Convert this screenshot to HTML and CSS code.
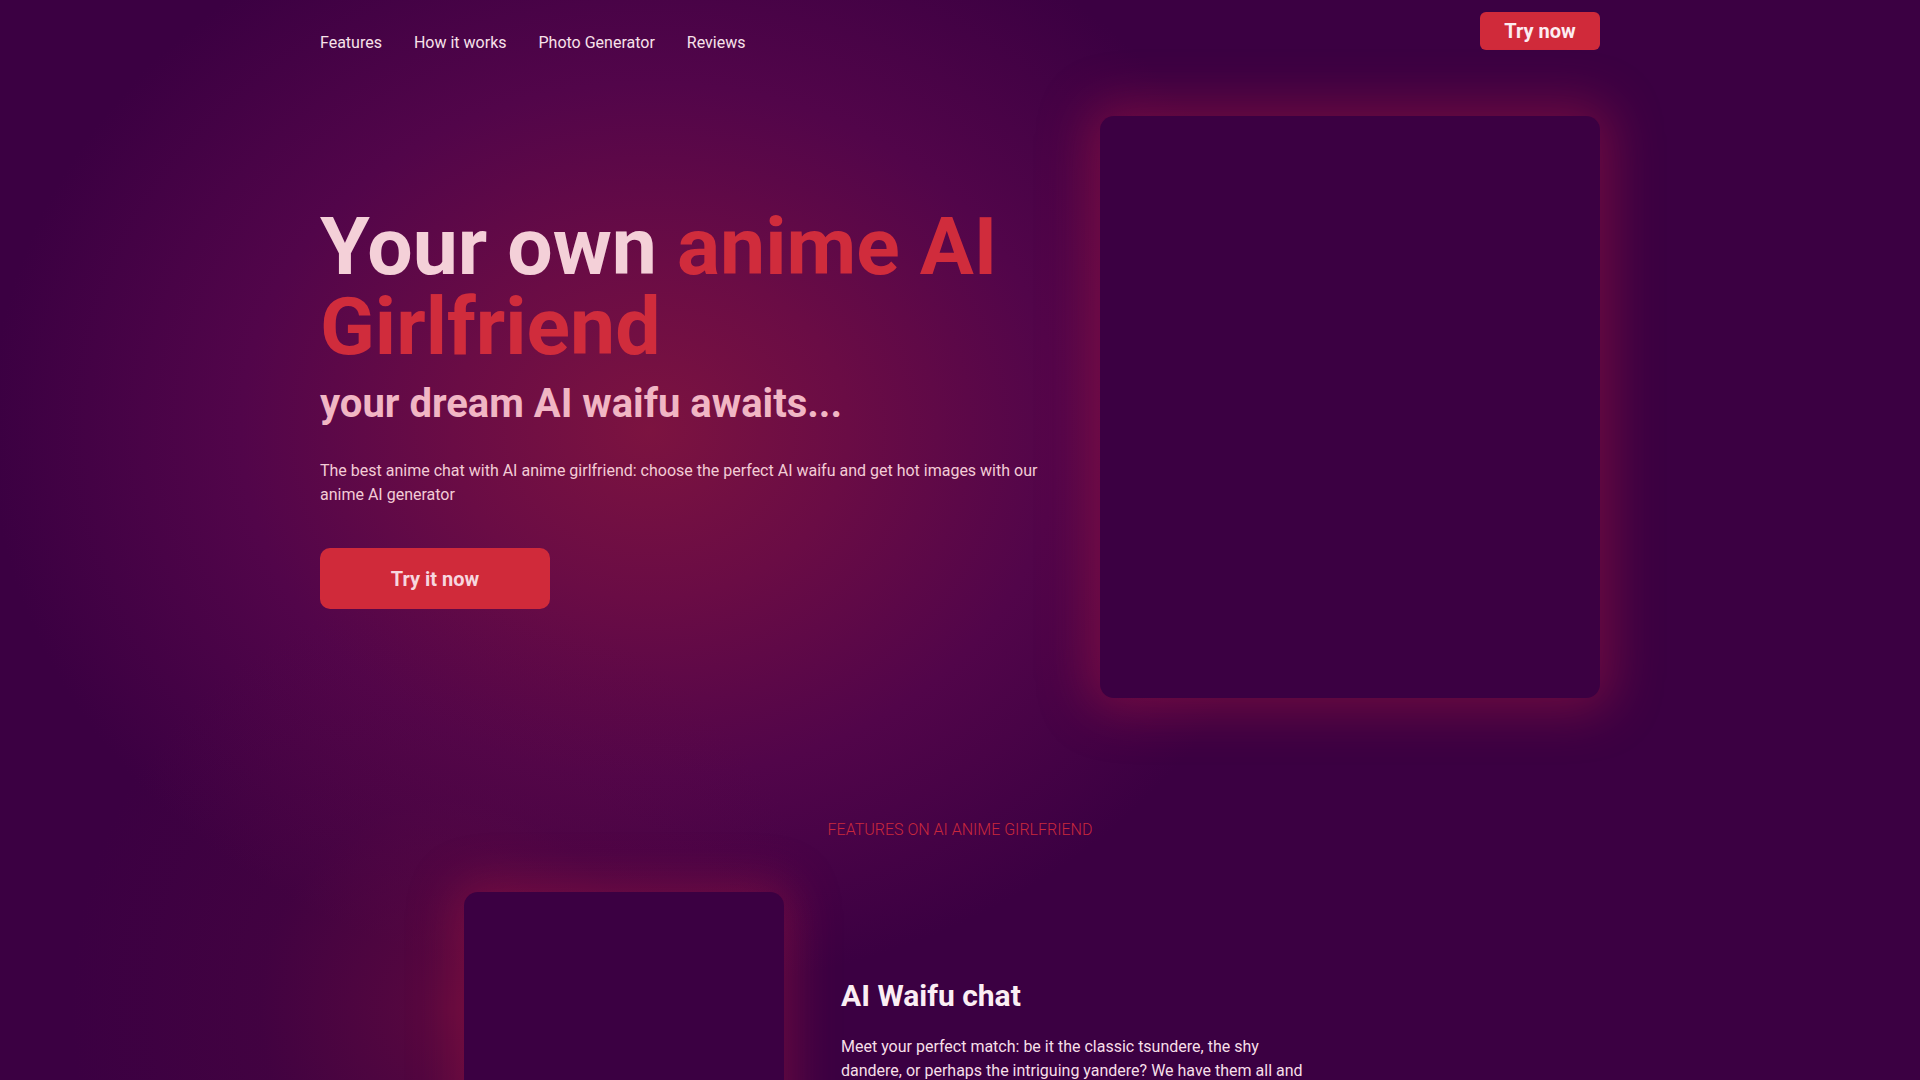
FILE: index.html
```html
<!DOCTYPE html>
<html lang="en">
<head>
<meta charset="utf-8">
<title>AI Anime Girlfriend</title>
<link rel="stylesheet" href="styles.css">
</head>
<body>
<div class="page">
  <header class="header container">
    <nav class="nav-links">
      <a href="#features">Features</a>
      <a href="#how">How it works</a>
      <a href="#generator">Photo Generator</a>
      <a href="#reviews">Reviews</a>
    </nav>
    <a class="btn btn-small" href="#try">Try now</a>
  </header>

  <section class="hero container">
    <div class="hero-text">
      <h1 class="hero-title"><span class="light">Your own</span> <span class="red">anime AI Girlfriend</span></h1>
      <h2 class="hero-sub">your dream AI waifu awaits...</h2>
      <p class="hero-desc">The best anime chat with AI anime girlfriend: choose the perfect AI waifu and get hot images with our anime AI generator</p>
      <a class="btn btn-large" href="#try">Try it now</a>
    </div>
    <div class="hero-image"></div>
  </section>

  <section class="features" id="features">
    <p class="features-label">FEATURES ON AI ANIME GIRLFRIEND</p>
    <div class="feature-row">
      <div class="feature-image"></div>
      <div class="feature-text">
        <h3 class="feature-title">AI Waifu chat</h3>
        <p class="feature-desc">Meet your perfect match: be it the classic tsundere, the shy dandere, or perhaps the intriguing yandere? We have them all and many more, waiting to chat with you any time of the day.</p>
      </div>
    </div>
  </section>
</div>
</body>
</html>
```
FILE: styles.css
```css
* { box-sizing: border-box; }

html, body {
  margin: 0;
  padding: 0;
}

body {
  font-family: Roboto, "Liberation Sans", Arial, sans-serif;
  background-color: #3b0042;
  color: #f6dde6;
  min-height: 100vh;
}

.page {
  background:
    radial-gradient(ellipse 380px 420px at 450px 1010px, rgba(120, 16, 60, 0.5) 0%, rgba(90, 10, 62, 0.22) 50%, rgba(59, 0, 66, 0) 100%),
    radial-gradient(ellipse 660px 560px at 650px 430px, #7c1340 0%, #6a0c45 30%, #52054a 62%, rgba(59, 0, 66, 0) 100%),
    #3b0042;
  min-height: 1300px;
}

.container {
  width: 1280px;
  margin: 0 auto;
}

a { text-decoration: none; }

/* header */
.header {
  display: flex;
  justify-content: space-between;
  align-items: flex-start;
  padding-top: 12px;
}

.nav-links {
  display: flex;
  gap: 32px;
  padding-top: 19px;
  line-height: 24px;
  font-size: 16px;
}

.nav-links a {
  color: #f8e1ea;
}

.btn {
  display: inline-flex;
  align-items: center;
  justify-content: center;
  background: #d02a3a;
  font-weight: 700;
  font-size: 20px;
}

.btn-small {
  width: 120px;
  height: 38px;
  border-radius: 6px;
  color: #fcecf1;
}

.btn-large {
  width: 230px;
  height: 61px;
  border-radius: 10px;
  color: #f7d6df;
}

/* hero */
.hero {
  display: grid;
  grid-template-columns: 720px 500px;
  column-gap: 60px;
  align-items: center;
  padding-top: 61px;
}

.hero-text {
  padding-top: 2px;
}

.hero-title {
  margin: 0;
  font-size: 80.5px;
  line-height: 80px;
  font-weight: 700;
}

.hero-title .light { color: #f4d0d8; }
.hero-title .red { color: #d02c3c; }

.hero-sub {
  margin: 13px 0 0;
  font-size: 40px;
  line-height: 48px;
  font-weight: 700;
  color: #f1b6c4;
}

.hero-desc {
  margin: 31px 0 0;
  font-size: 16px;
  line-height: 24px;
  color: #f3ccd6;
}

.hero-desc + .btn-large { margin-top: 41px; }

.hero-image {
  height: 582px;
  border-radius: 14px;
  background: #3b0042;
  box-shadow: 0 0 50px 12px rgba(190, 28, 62, 0.4);
}

/* features */
.features {
  padding-top: 120px;
}

.features-label {
  margin: 0;
  text-align: center;
  font-size: 16px;
  line-height: 24px;
  font-weight: 300;
  color: #c9283c;
}

.feature-row {
  width: 992px;
  margin: 50px auto 0;
  display: grid;
  grid-template-columns: 320px 470px;
  column-gap: 57px;
  align-items: start;
}

.feature-image {
  height: 420px;
  border-radius: 14px;
  background: #3b0042;
  box-shadow: 0 0 46px 10px rgba(170, 24, 62, 0.4);
}

.feature-text {
  padding-top: 86px;
}

.feature-title {
  margin: 0;
  font-size: 30px;
  line-height: 36px;
  font-weight: 700;
  color: #fbeef4;
}

.feature-desc {
  margin: 21px 0 0;
  font-size: 16px;
  line-height: 24px;
  color: #f6dfe8;
}
```
